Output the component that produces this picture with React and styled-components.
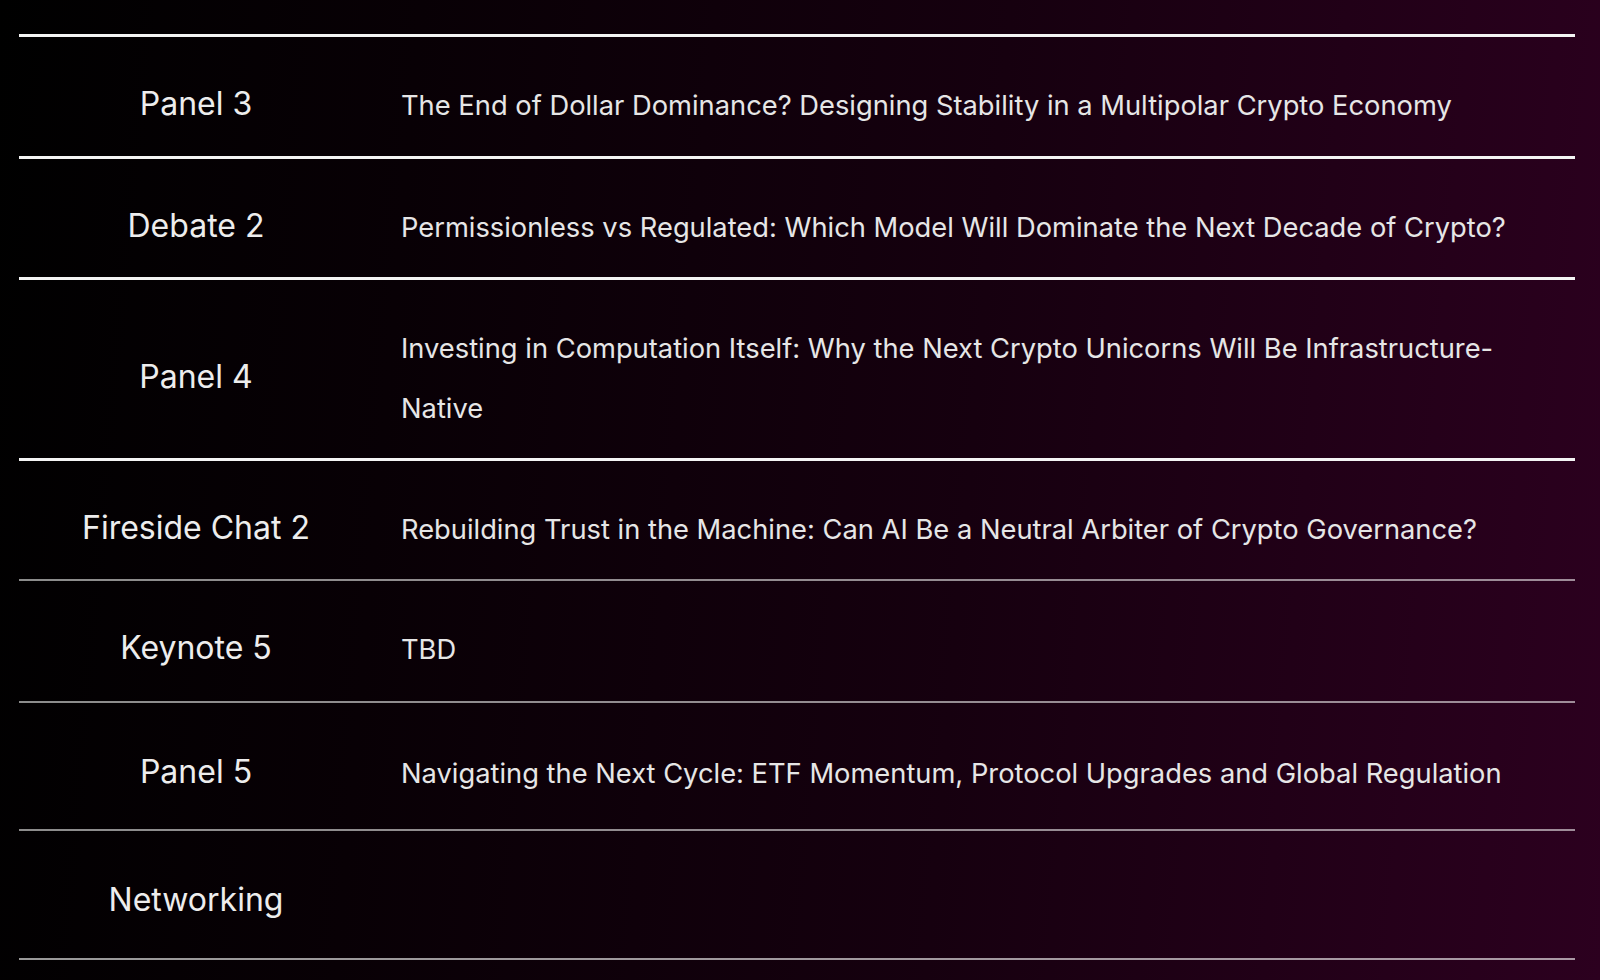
import React from "react";
import styled, { createGlobalStyle } from "styled-components";

const GlobalStyle = createGlobalStyle`
  html, body {
    margin: 0;
    padding: 0;
    background: #000;
  }
  body {
    font-family: Inter, "Noto Sans", "Liberation Sans", sans-serif;
    -webkit-font-smoothing: antialiased;
  }
`;

const Page = styled.div`
  min-height: 980px;
  box-sizing: border-box;
  padding: 34px 25px 0 19px;
  background: linear-gradient(95deg, #000000 0%, #080005 25%, #16000f 60%, #2c001f 100%);
`;

const Agenda = styled.div`
  display: flex;
  flex-direction: column;
`;

const rowPadding = (p) => {
  if (p.$roomy) return "37px 0 25px";
  if (p.$strong) return "35px 0 19px";
  return "35px 0 21px";
};

const Row = styled.div`
  display: grid;
  grid-template-columns: 354px 1fr;
  column-gap: 28px;
  align-items: center;
  border-top: ${(p) => (p.$strong ? "3px solid #f4f4f4" : "2px solid rgba(255, 255, 255, 0.55)")};
  padding: ${rowPadding};

  &:first-child {
    padding-bottom: 20px;
  }

  &:last-child {
    padding-bottom: 26px;
    border-bottom: 2px solid rgba(255, 255, 255, 0.6);
  }
`;

const Label = styled.div`
  text-align: center;
  font-size: 32px;
  line-height: 60px;
  color: #ededed;
  white-space: nowrap;
`;

const Title = styled.div`
  font-size: 27.3px;
  line-height: 60px;
  color: #e6e6e6;
  padding: 4px 40px 0 0;
  min-height: 60px;
`;

const sessions = [
  {
    label: "Panel 3",
    title: "The End of Dollar Dominance? Designing Stability in a Multipolar Crypto Economy",
    strong: true,
  },
  {
    label: "Debate 2",
    title: "Permissionless vs Regulated: Which Model Will Dominate the Next Decade of Crypto?",
    strong: true,
  },
  {
    label: "Panel 4",
    title: "Investing in Computation Itself: Why the Next Crypto Unicorns Will Be Infrastructure-Native",
    strong: true,
  },
  {
    label: "Fireside Chat 2",
    title: "Rebuilding Trust in the Machine: Can AI Be a Neutral Arbiter of Crypto Governance?",
    strong: true,
  },
  { label: "Keynote 5", title: "TBD" },
  {
    label: "Panel 5",
    title: "Navigating the Next Cycle: ETF Momentum, Protocol Upgrades and Global Regulation",
    roomy: true,
  },
  { label: "Networking", title: "", roomy: true },
];

export default function App() {
  return (
    <>
      <GlobalStyle />
      <Page>
        <Agenda>
          {sessions.map((s) => (
            <Row key={s.label} $strong={s.strong} $roomy={s.roomy}>
              <Label>{s.label}</Label>
              <Title>{s.title}</Title>
            </Row>
          ))}
        </Agenda>
      </Page>
    </>
  );
}
